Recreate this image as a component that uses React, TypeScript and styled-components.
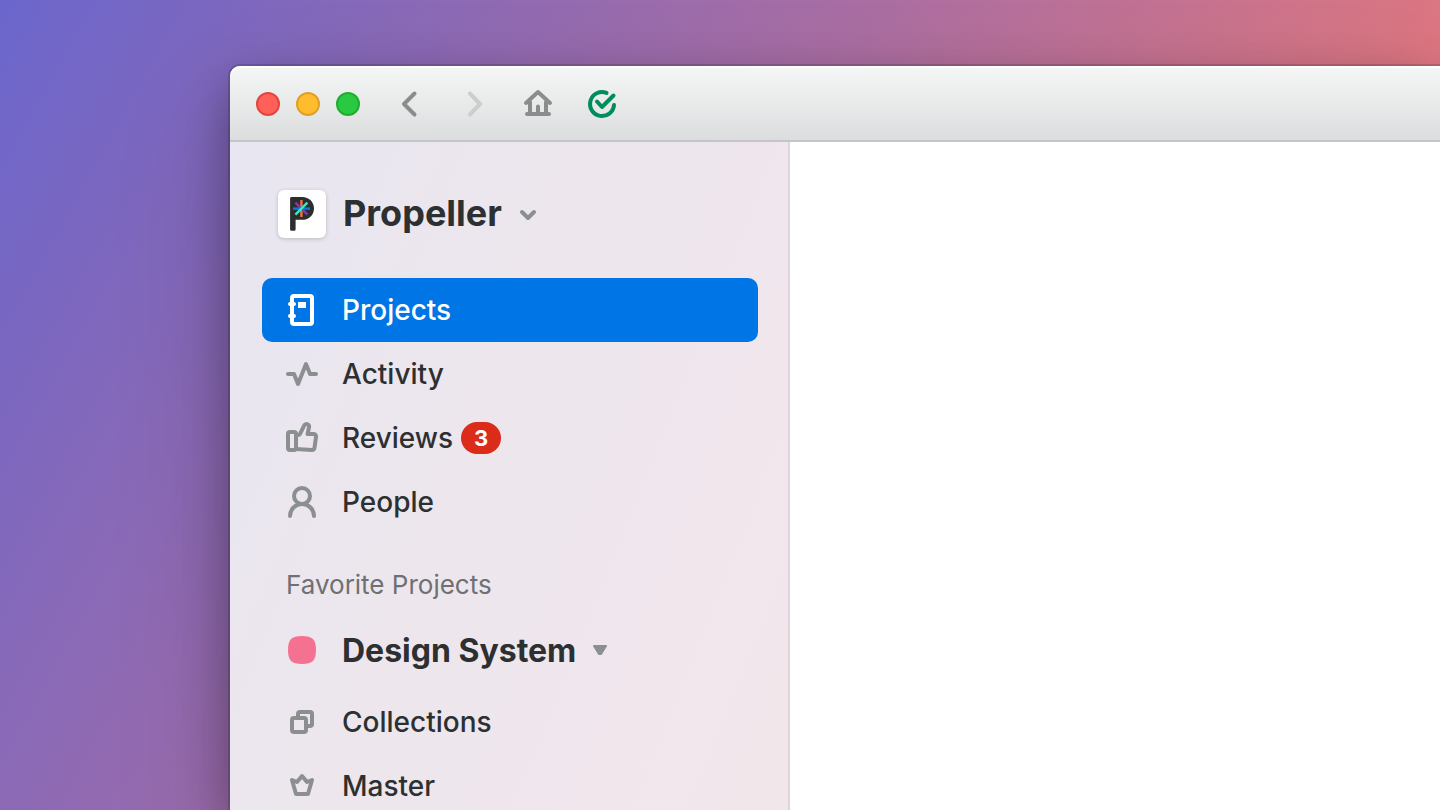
import React from 'react';
import styled, { createGlobalStyle } from 'styled-components';

const GlobalStyle = createGlobalStyle`
  *, *::before, *::after { box-sizing: border-box; }
  body {
    margin: 0;
    font-family: Inter, "Liberation Sans", sans-serif;
    color: #2d3031;
    -webkit-font-smoothing: antialiased;
  }
  button { font: inherit; color: inherit; border: 0; padding: 0; background: none; cursor: pointer; }
  a { color: inherit; text-decoration: none; }
`;

const Desktop = styled.div`
  display: flex;
  height: 100vh;
  padding: 66px 0 0 230px;
  overflow: hidden;
  background: linear-gradient(119deg, #6b66cc 0%, #8068bd 15%, #ab6ea2 47%, #dc7681 77%);
`;

const Window = styled.div`
  flex: 1;
  min-width: 0;
  display: flex;
  flex-direction: column;
  border-radius: 10px 0 0 0;
  box-shadow:
    0 0 0 2px rgba(0, 0, 0, 0.14),
    0 20px 50px rgba(0, 0, 0, 0.35),
    0 50px 120px rgba(0, 0, 0, 0.15);
`;

const TitleBar = styled.header`
  flex: none;
  display: flex;
  align-items: center;
  height: 76px;
  padding: 2px 0 0 26px;
  border-bottom: 2px solid #c3c5c8;
  border-radius: 10px 0 0 0;
  background: linear-gradient(#f5f7f6, #dcddde);
  box-shadow: inset 0 2px 0 #fff;
`;

const Lights = styled.div`
  display: flex;
  gap: 16px;
  margin-right: 34px;
`;

const Light = styled.button<{ $fill: string; $edge: string }>`
  width: 24px;
  height: 24px;
  border: 2px solid ${(p) => p.$edge};
  border-radius: 50%;
  background: ${(p) => p.$fill};
`;

const Tools = styled.nav`
  display: flex;
  gap: 32px;
`;

const ToolButton = styled.button<{ $color?: string }>`
  display: flex;
  color: ${(p) => p.$color ?? '#8a8c8e'};
`;

const Body = styled.div`
  flex: 1;
  min-height: 0;
  display: flex;
`;

const Sidebar = styled.aside`
  flex: none;
  width: 560px;
  padding: 48px 30px 0 32px;
  overflow: hidden;
  border-right: 2px solid #dcd6dc;
  background: linear-gradient(112deg, #e8e6f1 0%, #ece6ee 32%, #f0e6ed 72%, #f1e7ea 100%);
`;

const Content = styled.main`
  flex: 1;
  background: #fff;
`;

const TeamButton = styled.button`
  display: flex;
  align-items: center;
  height: 48px;
  margin: 0 0 40px 16px;

  > svg { color: #8b8f90; }
`;

const LogoTile = styled.span`
  display: flex;
  border-radius: 6px;
  background: #fff;
  box-shadow: 0 1px 4px rgba(0, 0, 0, 0.2);
`;

const TeamName = styled.span`
  margin: 0 16px 0 17px;
  font-size: 36px;
  font-weight: 700;
  line-height: 46px;
  padding-bottom: 2px;
`;

const NavList = styled.ul`
  margin: 0;
  padding: 0;
  list-style: none;
`;

const NavLink = styled.a<{ $active?: boolean }>`
  display: flex;
  align-items: center;
  height: 64px;
  padding: 0 24px;
  border-radius: 10px;
  font-size: 28px;
  font-weight: 500;
  color: ${(p) => (p.$active ? '#fff' : '#2d3031')};
  background: ${(p) => (p.$active ? '#0075e6' : 'transparent')};

  svg {
    margin-right: 24px;
    color: ${(p) => (p.$active ? '#fff' : '#8b8f90')};
  }
`;

const Badge = styled.span`
  width: 40px;
  margin-left: 8px;
  border-radius: 16px;
  background: #da2b1b;
  color: #fff;
  font-size: 22px;
  font-weight: 700;
  line-height: 32px;
  text-align: center;
`;

const SectionTitle = styled.h2`
  margin: 34px 24px 8px;
  font-size: 26px;
  font-weight: 400;
  line-height: 34px;
  color: #6e7072;
`;

const ProjectButton = styled.button`
  display: flex;
  align-items: center;
  height: 80px;
  padding: 0 24px;
`;

const ProjectName = styled.span`
  margin: 0 14px 0 24px;
  font-size: 32px;
  font-weight: 700;
`;

type IconProps = { size?: number; children: React.ReactNode };

const Icon = ({ size = 32, children }: IconProps) => (
  <svg
    width={size}
    height={size}
    viewBox={`0 0 ${size} ${size}`}
    fill="none"
    stroke="currentColor"
    strokeWidth="4"
    strokeLinecap="round"
    strokeLinejoin="round"
    aria-hidden="true"
  >
    {children}
  </svg>
);

const ProjectsIcon = () => (
  <Icon>
    <rect x="6" y="2" width="20" height="28" rx="2" />
    <path d="M4 10h4M4 22h4" />
    <path d="M12 8h8v6h-8z" fill="currentColor" stroke="none" />
  </Icon>
);

const ActivityIcon = () => (
  <Icon>
    <path d="M2 16h6l4 10 8-20 4 10h6" />
  </Icon>
);

const ReviewsIcon = () => (
  <Icon>
    <rect x="2" y="10" width="8" height="18" rx="2" />
    <path d="M10 13h2c1 0 1.600-.4 2-1.200l4-8c.6-1.400 2.200-2.100 3.600-1.500 1.200.5 1.700 1.700 1.400 3L21.600 12H27.500c1.600 0 2.700 1.200 2.500 2.700l-1.500 11c-.2 1.500-1.200 2.300-2.600 2.300L10 27" />
  </Icon>
);

const PeopleIcon = () => (
  <Icon>
    <circle cx="16" cy="10" r="8" />
    <path d="M4 30a12 12 0 0 1 24 0" />
  </Icon>
);

const CollectionsIcon = () => (
  <Icon>
    <rect x="6" y="12" width="14" height="14" rx="2" />
    <path d="M12 12V8a2 2 0 0 1 2-2h10a2 2 0 0 1 2 2v10a2 2 0 0 1-2 2h-4" />
  </Icon>
);

const MasterIcon = () => (
  <Icon>
    <path d="M6 10l5 2 5-6 5 6 5-2-4 14H10z" />
  </Icon>
);

const PropellerLogo = () => (
  <svg width="48" height="48" viewBox="0 0 48 48" fill="none" aria-hidden="true">
    <path
      d="M13.500 7H24.300C31 7 36 12 36 18.400S31 29.800 24.300 29.800H17.600V39.300A1.500 1.500 0 0 1 16.100 40.800H13.600A1.500 1.500 0 0 1 12.100 39.300V8.400A1.400 1.400 0 0 1 13.500 7Z"
      fill="#2b2d2e"
    />
    <g strokeWidth="2.400">
      <path d="M23.400 10v17" stroke="#f0733f" />
      <path d="M15 18.600h17" stroke="#1273eb" />
      <path d="M17.400 12.600l12 12" stroke="#7d3fa8" />
      <path d="M17.400 24.600l12-12" stroke="#3fe8bd" />
    </g>
  </svg>
);

const PRIMARY = [
  { label: 'Projects', icon: <ProjectsIcon />, active: true },
  { label: 'Activity', icon: <ActivityIcon /> },
  { label: 'Reviews', icon: <ReviewsIcon />, count: 3 },
  { label: 'People', icon: <PeopleIcon /> },
];

const PROJECT_LINKS = [
  { label: 'Collections', icon: <CollectionsIcon /> },
  { label: 'Master', icon: <MasterIcon /> },
];

export default function App() {
  return (
    <>
      <GlobalStyle />
      <Desktop>
        <Window>
          <TitleBar>
            <Lights>
              <Light aria-label="Close" $fill="#ff6058" $edge="#e2463f" />
              <Light aria-label="Minimize" $fill="#ffbd2e" $edge="#e0a027" />
              <Light aria-label="Zoom" $fill="#29ca41" $edge="#20ad30" />
            </Lights>
            <Tools>
              <ToolButton aria-label="Back">
                <Icon><path d="M20.500 5.500L10 16l10.500 10.500" /></Icon>
              </ToolButton>
              <ToolButton aria-label="Forward" $color="#cbcdcf">
                <Icon><path d="M12 5.500L22 16 12 26.500" /></Icon>
              </ToolButton>
              <ToolButton aria-label="Home">
                <Icon><path d="M4 15L16 4l12 11M8 14v12M24 14v12M5 26h22M16 18.500V26" /></Icon>
              </ToolButton>
              <ToolButton aria-label="Status" $color="#008c5f">
                <Icon><path d="M20.500 4.900A12 12 0 1 0 28 17M11 13.500l5 5.500L27.500 7.500" /></Icon>
              </ToolButton>
            </Tools>
          </TitleBar>
          <Body>
            <Sidebar>
              <TeamButton>
                <LogoTile><PropellerLogo /></LogoTile>
                <TeamName>Propeller</TeamName>
                <Icon size={20}><path d="M4 8l6 6 6-6" /></Icon>
              </TeamButton>
              <NavList>
                {PRIMARY.map((item) => (
                  <li key={item.label}>
                    <NavLink href="#" $active={item.active}>
                      {item.icon}
                      {item.label}
                      {item.count && <Badge>{item.count}</Badge>}
                    </NavLink>
                  </li>
                ))}
              </NavList>
              <SectionTitle>Favorite Projects</SectionTitle>
              <ProjectButton>
                <svg width="32" height="32" viewBox="0 0 32 32" aria-hidden="true">
                  <path d="M16 2C26.500 2 30 5.500 30 16S26.500 30 16 30 2 26.500 2 16 5.500 2 16 2Z" fill="#f57191" />
                </svg>
                <ProjectName>Design System</ProjectName>
                <svg width="20" height="20" viewBox="0 0 20 20" aria-hidden="true">
                  <path d="M4 6h12l-5 8h-2z" fill="#8b8f90" stroke="#8b8f90" strokeWidth="2" strokeLinejoin="round" />
                </svg>
              </ProjectButton>
              <NavList>
                {PROJECT_LINKS.map((item) => (
                  <li key={item.label}>
                    <NavLink href="#">
                      {item.icon}
                      {item.label}
                    </NavLink>
                  </li>
                ))}
              </NavList>
            </Sidebar>
            <Content />
          </Body>
        </Window>
      </Desktop>
    </>
  );
}
